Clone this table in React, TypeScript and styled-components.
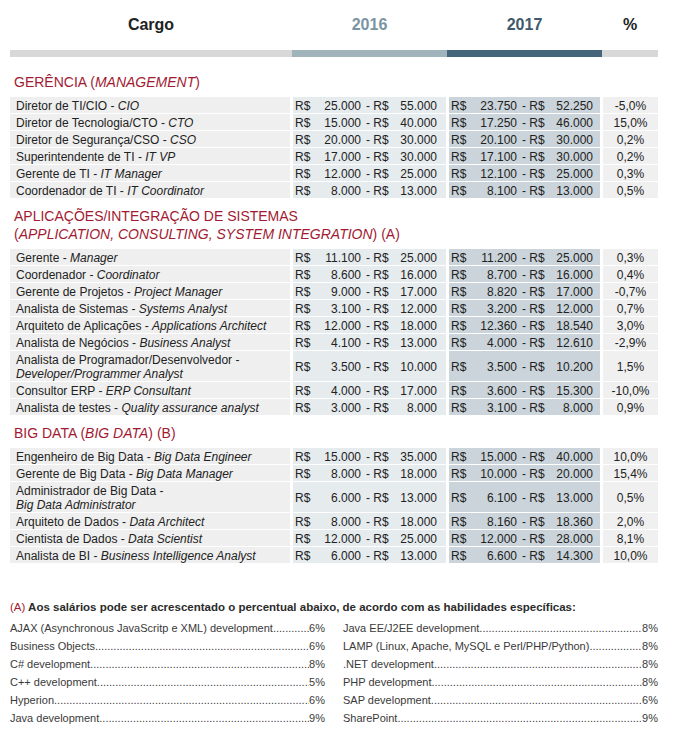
import React from "react";
import styled, { createGlobalStyle } from "styled-components";

const GlobalStyle = createGlobalStyle`
  body {
    margin: 0;
    background: #fff;
    font-family: "Liberation Sans", Arial, sans-serif;
    color: #2b2b2b;
  }
`;

type Row = { pt: string; en: string; a: string[]; b: string[]; pct: string; tall?: boolean };
type Section = { title: React.ReactNode; rows: Row[] };

const sections: Section[] = [
  {
    title: (<>GERÊNCIA (<i>MANAGEMENT</i>)</>),
    rows: [
      { pt: "Diretor de TI/CIO", en: "CIO", a: ["25.000", "55.000"], b: ["23.750", "52.250"], pct: "-5,0%" },
      { pt: "Diretor de Tecnologia/CTO", en: "CTO", a: ["15.000", "40.000"], b: ["17.250", "46.000"], pct: "15,0%" },
      { pt: "Diretor de Segurança/CSO", en: "CSO", a: ["20.000", "30.000"], b: ["20.100", "30.000"], pct: "0,2%" },
      { pt: "Superintendente de TI", en: "IT VP", a: ["17.000", "30.000"], b: ["17.100", "30.000"], pct: "0,2%" },
      { pt: "Gerente de TI", en: "IT Manager", a: ["12.000", "25.000"], b: ["12.100", "25.000"], pct: "0,3%" },
      { pt: "Coordenador de TI", en: "IT Coordinator", a: ["8.000", "13.000"], b: ["8.100", "13.000"], pct: "0,5%" },
    ],
  },
  {
    title: (<>APLICAÇÕES/INTEGRAÇÃO DE SISTEMAS<br />(<i>APPLICATION, CONSULTING, SYSTEM INTEGRATION</i>) (A)</>),
    rows: [
      { pt: "Gerente", en: "Manager", a: ["11.100", "25.000"], b: ["11.200", "25.000"], pct: "0,3%" },
      { pt: "Coordenador", en: "Coordinator", a: ["8.600", "16.000"], b: ["8.700", "16.000"], pct: "0,4%" },
      { pt: "Gerente de Projetos", en: "Project Manager", a: ["9.000", "17.000"], b: ["8.820", "17.000"], pct: "-0,7%" },
      { pt: "Analista de Sistemas", en: "Systems Analyst", a: ["3.100", "12.000"], b: ["3.200", "12.000"], pct: "0,7%" },
      { pt: "Arquiteto de Aplicações", en: "Applications Architect", a: ["12.000", "18.000"], b: ["12.360", "18.540"], pct: "3,0%" },
      { pt: "Analista de Negócios", en: "Business Analyst", a: ["4.100", "13.000"], b: ["4.000", "12.610"], pct: "-2,9%" },
      { pt: "Analista de Programador/Desenvolvedor", en: "Developer/Programmer Analyst", a: ["3.500", "10.000"], b: ["3.500", "10.200"], pct: "1,5%", tall: true },
      { pt: "Consultor ERP", en: "ERP Consultant", a: ["4.000", "17.000"], b: ["3.600", "15.300"], pct: "-10,0%" },
      { pt: "Analista de testes", en: "Quality assurance analyst", a: ["3.000", "8.000"], b: ["3.100", "8.000"], pct: "0,9%" },
    ],
  },
  {
    title: (<>BIG DATA (<i>BIG DATA</i>) (B)</>),
    rows: [
      { pt: "Engenheiro de Big Data", en: "Big Data Engineer", a: ["15.000", "35.000"], b: ["15.000", "40.000"], pct: "10,0%" },
      { pt: "Gerente de Big Data", en: "Big Data Manager", a: ["8.000", "18.000"], b: ["10.000", "20.000"], pct: "15,4%" },
      { pt: "Administrador de Big Data", en: "Big Data Administrator", a: ["6.000", "13.000"], b: ["6.100", "13.000"], pct: "0,5%", tall: true },
      { pt: "Arquiteto de Dados", en: "Data Architect", a: ["8.000", "18.000"], b: ["8.160", "18.360"], pct: "2,0%" },
      { pt: "Cientista de Dados", en: "Data Scientist", a: ["12.000", "25.000"], b: ["12.000", "28.000"], pct: "8,1%" },
      { pt: "Analista de BI", en: "Business Intelligence Analyst", a: ["6.000", "13.000"], b: ["6.600", "14.300"], pct: "10,0%" },
    ],
  },
];

const skillsLeft = [
  ["AJAX (Asynchronous JavaScritp e XML) development", "6%"],
  ["Business Objects", "6%"],
  ["C# development", "8%"],
  ["C++ development", "5%"],
  ["Hyperion", "6%"],
  ["Java development", "9%"],
];

const skillsRight = [
  ["Java EE/J2EE development", "8%"],
  ["LAMP (Linux, Apache, MySQL e Perl/PHP/Python)", "8%"],
  [".NET development", "8%"],
  ["PHP development", "8%"],
  ["SAP development", "6%"],
  ["SharePoint", "9%"],
];

const Page = styled.div`
  width: 648px;
  padding: 0 15px 0 10px;
`;

const HeaderRow = styled.div`
  display: grid;
  grid-template-columns: 282px 155px 155px 56px;
  height: 50px;
  align-items: center;
  font-size: 16px;
  font-weight: 700;
  text-align: center;
`;

const HeadCell = styled.div<{ $color: string }>`
  color: ${(p) => p.$color};
`;

const Bar = styled.div`
  display: grid;
  grid-template-columns: 282px 155px 155px 56px;
  height: 7px;
  margin-bottom: 7px;
`;

const BarPart = styled.div<{ $bg: string }>`
  background: ${(p) => p.$bg};
`;

const SectionBlock = styled.section`
  padding-top: 9px;
`;

const SectionTitle = styled.h2`
  margin: 0 0 6px 4px;
  font-size: 14px;
  line-height: 18px;
  font-weight: 400;
  color: #a21a32;
`;

const Rows = styled.div`
  display: flex;
  flex-direction: column;
  gap: 1px;
`;

const TableRow = styled.div<{ $tall?: boolean }>`
  display: grid;
  grid-template-columns: 280px 153px 151px 55px;
  column-gap: 3px;
  height: ${(p) => (p.$tall ? "30px" : "16px")};
  font-size: 12px;
  line-height: 14px;
  color: #222;
`;

const NameCell = styled.div`
  background: #efefef;
  padding: 1px 6px 0;
  display: flex;
  flex-direction: column;
  justify-content: center;
`;

const MoneyCell = styled.div<{ $bg: string; $pr: number }>`
  background: ${(p) => p.$bg};
  display: grid;
  grid-template-columns: 20px 46px 31px 45px;
  padding: 1px ${(p) => p.$pr}px 0 2px;
  align-items: center;
  white-space: nowrap;
`;

const Num = styled.span`
  text-align: right;
`;

const Sep = styled.span`
  padding-left: 5px;
`;

const PctCell = styled.div`
  background: #f0f0f0;
  display: flex;
  align-items: center;
  justify-content: center;
  padding-top: 1px;
`;

const Note = styled.div`
  margin-top: 36px;
`;

const NoteTitle = styled.p`
  margin: 0 0 4px;
  font-size: 11.5px;
  line-height: 16px;
  font-weight: 700;
  color: #2b2b2b;
  span {
    color: #a21a32;
    font-weight: 400;
  }
`;

const NoteCols = styled.div`
  display: grid;
  grid-template-columns: 315px 315px;
  column-gap: 18px;
`;

const SkillItem = styled.div`
  display: flex;
  font-size: 11px;
  line-height: 18px;
  color: #3a3a3a;
  white-space: nowrap;
`;

const Leader = styled.span`
  flex: 1;
  overflow: hidden;
  &::after {
    content: "........................................................................................................................................................";
  }
`;

function Money({ v, bg, pr }: { v: string[]; bg: string; pr: number }) {
  return (
    <MoneyCell $bg={bg} $pr={pr}>
      <span>R$</span>
      <Num>{v[0]}</Num>
      <Sep>- R$</Sep>
      <Num>{v[1]}</Num>
    </MoneyCell>
  );
}

export default function App() {
  return (
    <>
      <GlobalStyle />
      <Page>
        <HeaderRow>
          <HeadCell $color="#222">Cargo</HeadCell>
          <HeadCell $color="#7a94a3">2016</HeadCell>
          <HeadCell $color="#3f5a6b">2017</HeadCell>
          <HeadCell $color="#222">%</HeadCell>
        </HeaderRow>
        <Bar>
          <BarPart $bg="#d8d8d8" />
          <BarPart $bg="#a1b3bb" />
          <BarPart $bg="#45667a" />
          <BarPart $bg="#d8d8d8" />
        </Bar>

        {sections.map((s, i) => (
          <SectionBlock key={i}>
            <SectionTitle>{s.title}</SectionTitle>
            <Rows>
              {s.rows.map((r) => (
                <TableRow key={r.pt} $tall={r.tall}>
                  <NameCell>
                    {r.tall ? (
                      <>
                        <span>{r.pt} -</span>
                        <i>{r.en}</i>
                      </>
                    ) : (
                      <span>
                        {r.pt} - <i>{r.en}</i>
                      </span>
                    )}
                  </NameCell>
                  <Money v={r.a} bg="#e6ebee" pr={9} />
                  <Money v={r.b} bg="#cad4da" pr={7} />
                  <PctCell>{r.pct}</PctCell>
                </TableRow>
              ))}
            </Rows>
          </SectionBlock>
        ))}

        <Note>
          <NoteTitle>
            <span>(A)</span> Aos salários pode ser acrescentado o percentual abaixo, de acordo com as habilidades específicas:
          </NoteTitle>
          <NoteCols>
            {[skillsLeft, skillsRight].map((col, ci) => (
              <div key={ci}>
                {col.map(([name, pct]) => (
                  <SkillItem key={name}>
                    <span>{name}</span>
                    <Leader />
                    <span>{pct}</span>
                  </SkillItem>
                ))}
              </div>
            ))}
          </NoteCols>
        </Note>
      </Page>
    </>
  );
}
